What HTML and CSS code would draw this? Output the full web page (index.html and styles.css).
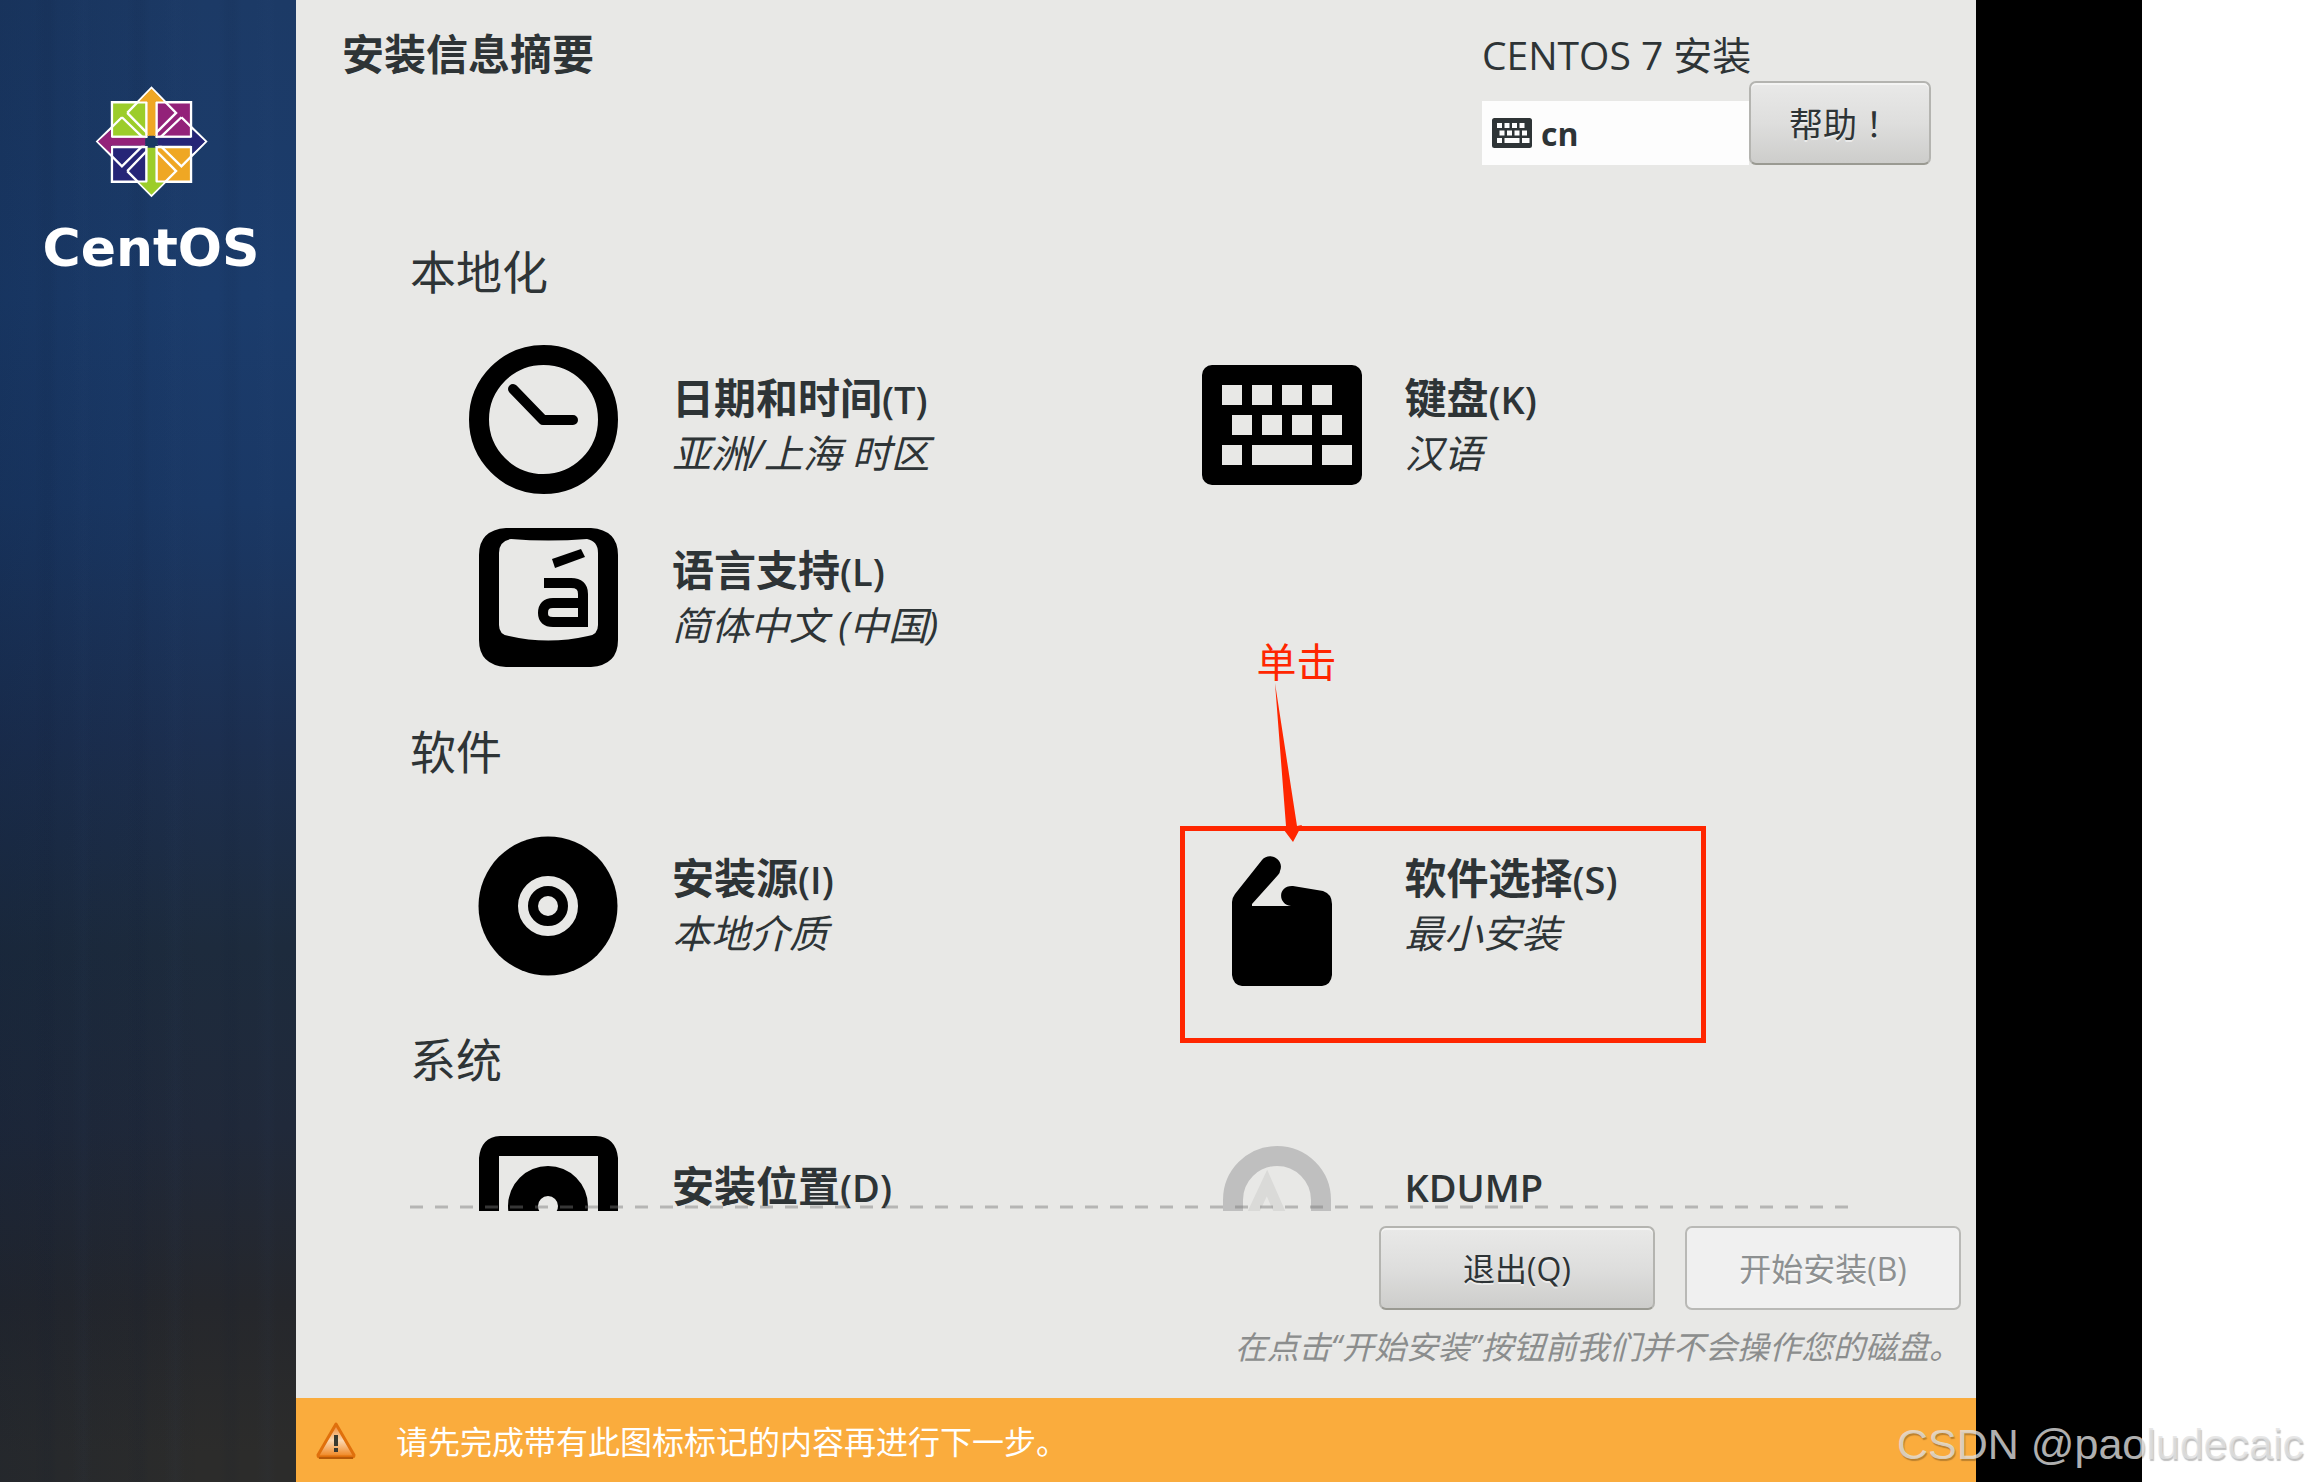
FILE: index.html
```html
<!DOCTYPE html>
<html lang="zh-CN">
<head>
<meta charset="utf-8">
<meta name="viewport" content="width=device-width, initial-scale=1">
<title>安装信息摘要</title>
<link rel="stylesheet" href="styles.css">
</head>
<body>
<svg class="defs" aria-hidden="true">
  <symbol id="keyboard" viewBox="0 0 16 12">
    <path fill="currentColor" fill-rule="evenodd" d="M1 0H15A1 1 0 0 1 16 1V11A1 1 0 0 1 15 12H1A1 1 0 0 1 0 11V1A1 1 0 0 1 1 0ZM2 2V4H4V2ZM5 2V4H7V2ZM8 2V4H10V2ZM11 2V4H13V2ZM3 5V7H5V5ZM6 5V7H8V5ZM9 5V7H11V5ZM12 5V7H14V5ZM2 8V10H4V8ZM5 8V10H11V8ZM12 8V10H15V8Z"/>
  </symbol>
</svg>
<div class="app">
  <aside class="sidebar">
    <svg class="logo" viewBox="285 73 340 340" aria-hidden="true">
      <g stroke="#fff" stroke-width="7">
        <path fill="#9ccd2a" d="M336 125H440V229H336Z"/>
        <path fill="#932279" d="M470 125H574V229H470Z"/>
        <path fill="#262577" d="M336 260H440V364H336Z"/>
        <path fill="#efa724" d="M470 260H574V364H470Z"/>
        <path fill="none" d="M382 157L455 82L529 157L462 224M382 157L448 224M382 332L455 406L529 332L462 264M382 332L448 264M366 170L292 243L366 318L434 250M366 170L434 236M545 170L619 243L545 318L476 250M545 170L476 236"/>
      </g>
      <path fill="#efa724" d="M455 84L492 123H468V226H442V123H418Z"/>
      <path fill="#9ccd2a" d="M455 403L492 366H468V262H442V366H418Z"/>
      <path fill="#932279" d="M294 243L333 208V231H436V256H333V280Z"/>
      <path fill="#262577" d="M616 243L578 208V231H474V256H578V280Z"/>
      <path fill="none" stroke="#fff" stroke-width="6" d="M440 124V224M470 124V224M440 262V364M470 262V364M336 229H436M336 259H436M474 229H574M474 259H574"/>
      <path fill="#1a3963" d="M443 231H467V256H443Z"/>
    </svg>
    <div class="wordmark">CentOS</div>
  </aside>

  <div class="main">
    <header class="header">
      <h1>安装信息摘要</h1>
      <div class="product">
        <div class="product-name">CENTOS 7 安装</div>
        <div class="product-tools">
          <button class="layout" type="button"><svg class="layout-icon" aria-hidden="true"><use href="#keyboard"/></svg>cn</button>
          <button class="btn help" type="button">帮助<span class="mark" lang="zh-TW">！</span></button>
        </div>
      </div>
    </header>

    <main class="hub">
      <section>
        <h2>本地化</h2>
        <div class="spokes">
          <button class="spoke" type="button">
            <svg class="icon" viewBox="0 0 160 160" aria-hidden="true" fill="none" stroke="#000"><circle cx="74.500" cy="74.500" r="64.500" stroke-width="20"/><path stroke-width="10" stroke-linecap="round" stroke-linejoin="round" d="M44 44L74 75H104"/></svg>
            <span class="label"><b>日期和时间<span class="key">(T)</span></b><i>亚洲/上海 时区</i></span>
          </button>
          <button class="spoke" type="button">
            <svg class="icon" aria-hidden="true"><use href="#keyboard"/></svg>
            <span class="label"><b>键盘<span class="key">(K)</span></b><i>汉语</i></span>
          </button>
          <button class="spoke" type="button">
            <svg class="icon" viewBox="0 0 160 160" aria-hidden="true"><path fill-rule="evenodd" d="M37 11H122Q149 13 149 38V123Q149 148 122 150H37Q10 148 10 123V38Q10 13 37 11ZM42 22Q30 24 30 36V108Q30 118 40 119Q79 128 119 119Q129 118 129 108V36Q129 24 118 22Q79 25 42 22Z"/><path d="M83 42L112 32L116 40L86 51Z"/><path fill="none" stroke="#000" stroke-width="10" d="M75 66H102Q114 66 114 77V105H84Q74 105 74 96Q74 86 84 86H114"/></svg>
            <span class="label"><b>语言支持<span class="key">(L)</span></b><i>简体中文 (中国)</i></span>
          </button>
        </div>
      </section>

      <section>
        <h2>软件</h2>
        <div class="spokes">
          <button class="spoke" type="button">
            <svg class="icon" viewBox="0 0 160 160" aria-hidden="true"><circle cx="79" cy="81" r="69.500"/><circle cx="79" cy="81" r="25" fill="none" stroke="#e8e8e6" stroke-width="10"/><circle cx="79" cy="81" r="10" fill="#e8e8e6"/></svg>
            <span class="label"><b>安装源<span class="key">(I)</span></b><i>本地介质</i></span>
          </button>
          <button class="spoke marked" type="button">
            <svg class="icon" viewBox="0 0 160 160" aria-hidden="true"><path d="M30 77Q30 73 33 69L60 35C67 26 83 34 78 46Q78 48 76 50L50 79V81H89C75 79 76 60 91 61L121 66Q130 69 130 79V150Q129 160 120 161H40Q31 160 30 150Z"/></svg>
            <span class="label"><b>软件选择<span class="key">(S)</span></b><i>最小安装</i></span>
            <span class="callout">单击</span>
            <svg class="callout-arrow" viewBox="0 0 32 160" aria-hidden="true"><path fill="#ff2600" d="M3 0L25 143L30 142L21 159L12 147L14 143Z"/></svg>
          </button>
        </div>
      </section>

      <section>
        <h2>系统</h2>
        <div class="spokes">
          <button class="spoke" type="button">
            <svg class="icon" viewBox="0 0 160 160" aria-hidden="true"><path fill-rule="evenodd" d="M31 3H127Q147 4 149 25V120Q147 141 127 142H31Q12 141 10 120V25Q12 4 31 3ZM30 23V122H129V23Z"/><path fill-rule="evenodd" d="M79 33A40 40 0 0 1 79 113A40 40 0 0 1 79 33ZM79 63A10 10 0 0 0 79 83A10 10 0 0 0 79 63Z"/></svg>
            <span class="label"><b>安装位置<span class="key">(D)</span></b><i></i></span>
          </button>
          <button class="spoke" type="button">
            <svg class="icon" viewBox="0 0 160 160" aria-hidden="true" fill="none"><path stroke="#bfbfbf" stroke-width="20" d="M31 100V67A44 44 0 0 1 119 67V100"/><path stroke="#dadad8" stroke-width="11" d="M50 82L65 50L79 82"/></svg>
            <span class="label"><b><span class="key">KDUMP</span></b><i></i></span>
          </button>
        </div>
      </section>
      <svg class="more" aria-hidden="true"><line x1="0" y1="2" x2="100%" y2="2"/></svg>
    </main>

    <div class="actions">
      <div class="action-row">
        <button class="btn" type="button">退出(Q)</button>
        <button class="btn" type="button" disabled>开始安装(B)</button>
      </div>
      <p class="hint">在点击“开始安装”按钮前我们并不会操作您的磁盘。</p>
    </div>

    <footer class="notice">
      <svg class="warning" viewBox="0 0 40 38" aria-hidden="true">
        <defs><linearGradient id="warn" x1="0" y1="0" x2="0" y2="1"><stop offset="0" stop-color="#f08327"/><stop offset=".5" stop-color="#fbd7b0"/><stop offset="1" stop-color="#f0831a"/></linearGradient></defs>
        <path fill="url(#warn)" stroke="#e0700c" stroke-width="3" stroke-linejoin="round" d="M20 3L38 34Q38 36 36 36H4Q2 36 2 34Z"/>
        <path stroke="#b85a08" stroke-width="2" d="M3 37H37"/>
        <path stroke="#3a3a30" stroke-width="4" d="M20 14V25M20 27V31"/>
      </svg>
      <span>请先完成带有此图标标记的内容再进行下一步。</span>
    </footer>
  </div>

  <div class="gutter"></div>
  <div class="blank"></div>
  <div class="watermark">CSDN @paoludecaic</div>
</div>
</body>
</html>
```
FILE: styles.css
```css
* {
  box-sizing: border-box;
}

body {
  margin: 0;
  background: #fff;
  color: #2e3436;
  font-family: "Open Sans", "Noto Sans CJK SC", sans-serif;
  font-size: 32px;
}

button {
  margin: 0;
  padding: 0;
  border: 0;
  background: none;
  color: inherit;
  font: inherit;
  text-align: left;
}

svg {
  display: block;
  flex: none;
}

.defs {
  position: absolute;
  width: 0;
  height: 0;
}

.app {
  position: relative;
  display: flex;
  height: 100vh;
  overflow: hidden;
}

.sidebar {
  display: flex;
  flex: none;
  flex-direction: column;
  align-items: center;
  width: 296px;
  padding: 85px 0 0 6px;
  background:
    repeating-linear-gradient(90deg, transparent 0 34px, rgba(8, 20, 45, .06) 44px 50px, transparent 58px 72px, rgba(60, 90, 140, .04) 84px, transparent 92px),
    linear-gradient(90deg, rgba(8, 24, 50, .2), rgba(8, 24, 50, 0) 70%),
    linear-gradient(#1c3a66, #1b3c6c 20%, #1a3865 34%, #1c2f50 50%, #1d2b3d 64%, #20293a 76%, #25272c 88%, #2c2c2b 98%);
}

.logo {
  width: 113px;
  height: 113px;
}

.wordmark {
  margin-top: 18px;
  color: #fff;
  font: bold 52px/64px "DejaVu Sans", sans-serif;
}

.main {
  display: flex;
  flex: 1;
  flex-direction: column;
  min-width: 0;
  background: #e8e8e6;
}

.header {
  display: flex;
  flex: none;
  align-items: flex-start;
  justify-content: space-between;
  padding: 28px 45px 0 46px;
}

h1 {
  margin: 0;
  font-size: 42px;
  line-height: 52px;
}

.product {
  width: 449px;
}

.product-name {
  font-size: 39px;
  line-height: 53px;
}

.product-tools {
  display: flex;
  align-items: flex-end;
}

.layout {
  display: flex;
  flex: 1;
  gap: 9px;
  align-items: center;
  height: 64px;
  padding-left: 10px;
  background: #fdfdfd;
  font-weight: bold;
}

.layout-icon {
  width: 40px;
  height: 30px;
}

.btn {
  width: 276px;
  height: 84px;
  padding-bottom: 2px;
  border: 2px solid #b4b4b0;
  border-bottom-color: #9a9a92;
  border-radius: 7px;
  background: linear-gradient(#e9e9e8, #dededd 50%, #cdcdcb);
  box-shadow: inset 0 2px #f4f4f3;
  text-align: center;
  text-shadow: 0 2px rgba(255, 255, 255, .5);
}

.btn:disabled {
  border-color: #b9b9b6;
  background: #f0f0f0;
  box-shadow: none;
  color: #8d9091;
}

.help {
  width: 182px;
  font-size: 34px;
}

.mark {
  font-family: "Noto Sans CJK TC", sans-serif;
}

.hub {
  position: relative;
  display: flex;
  flex: 1;
  flex-direction: column;
  gap: 38px;
  min-height: 0;
  padding: 76px 101px 0 114px;
  overflow: hidden;
}

section {
  display: flex;
  flex: none;
  flex-direction: column;
  gap: 38px;
}

h2 {
  margin: 0;
  font-size: 46px;
  font-weight: normal;
  line-height: 60px;
}

.spokes {
  display: grid;
  grid-template-columns: repeat(2, 1fr);
  grid-auto-rows: 172px;
}

.spoke {
  position: relative;
  display: flex;
  gap: 43px;
  align-items: center;
  padding-left: 59px;
}

.icon {
  width: 160px;
  height: 160px;
  overflow: visible;
  color: #000;
}

.label {
  display: flex;
  flex-direction: column;
}

.label b {
  font-size: 42px;
  line-height: 53px;
}

.label i {
  min-height: 53px;
  font-size: 39px;
  line-height: 53px;
}

.key {
  font-size: 38px;
  font-weight: 600;
}

.marked::before {
  position: absolute;
  inset: 7px 169px -52px 37px;
  border: 5px solid #ff2600;
  content: "";
}

.callout {
  position: absolute;
  top: -183px;
  left: 114px;
  color: #ff2600;
  font-size: 40px;
  line-height: 52px;
}

.callout-arrow {
  position: absolute;
  top: -136px;
  left: 129px;
  width: 32px;
  height: 160px;
}

.more {
  position: absolute;
  right: 123px;
  bottom: 2px;
  left: 114px;
  width: calc(100% - 237px);
  height: 4px;
  stroke: rgba(120, 120, 120, .45);
  stroke-width: 3;
  stroke-dasharray: 13 12;
}

.actions {
  display: flex;
  flex: none;
  flex-direction: column;
  gap: 13px;
  padding: 15px 15px 27px;
}

.action-row {
  display: flex;
  gap: 30px;
  justify-content: flex-end;
}

.hint {
  margin: 0;
  color: #8b8d8d;
  font-style: italic;
  line-height: 48px;
  text-align: right;
}

.notice {
  display: flex;
  flex: none;
  gap: 40px;
  align-items: center;
  height: 84px;
  padding-left: 20px;
  background: #faac3d;
  color: #fff;
}

.warning {
  width: 40px;
  height: 38px;
}

.gutter,
.blank {
  flex: none;
  width: 166px;
}

.gutter {
  background: #000;
}

.watermark {
  position: absolute;
  right: 4px;
  bottom: 12px;
  color: rgba(225, 225, 225, .8);
  font: 43px/52px "Liberation Sans", sans-serif;
  text-shadow: 1px 2px 1px rgba(0, 0, 0, .25);
}
```
